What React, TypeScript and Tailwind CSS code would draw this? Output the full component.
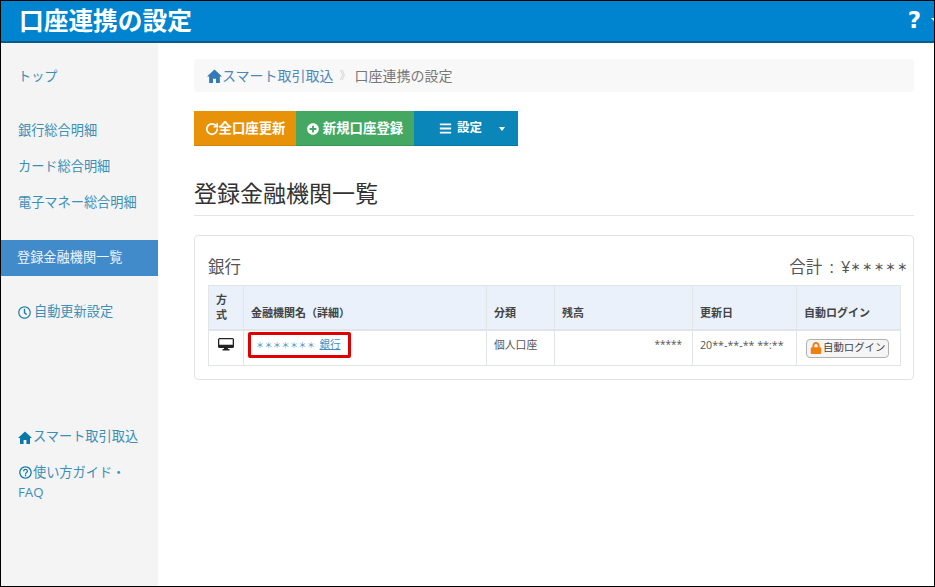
import React from "react";
import { FaPlusCircle, FaBars, FaRegClock, FaLock } from "react-icons/fa";
import { MdOutlineHelpOutline } from "react-icons/md";
import { RotateCw } from "lucide-react";

const FONT = "font-['Open_Sans','Noto_Sans_CJK_JP',sans-serif]";

function HomeIcon({ className = "" }: { className?: string }) {
    return (
        <svg viewBox="0 0 14 13" className={className} fill="currentColor">
            <path d="M7 0.5 L14 7 H12 V13 H8.4 V9 H5.6 V13 H2 V7 H0 Z" />
        </svg>
    );
}

function MonitorIcon() {
    return (
        <svg viewBox="0 0 16 13" className="mx-auto w-[16px] h-[13px] text-[#222222]" fill="currentColor">
            <path d="M1.5 0 H14.5 A1.5 1.5 0 0 1 16 1.5 V8.5 A1.5 1.5 0 0 1 14.5 10 H10 V11 H11.5 V12.5 H4.5 V11 H6 V10 H1.5 A1.5 1.5 0 0 1 0 8.5 V1.5 A1.5 1.5 0 0 1 1.5 0 Z M1.3 1.3 V6.8 H14.7 V1.3 Z" fillRule="evenodd" />
        </svg>
    );
}

function SideLink({ children, className = "" }: { children: React.ReactNode; className?: string }) {
    return (
        <a className={`flex items-center h-9 pl-[17px] text-[13.2px] text-[#3b8fb5] ${className}`}>{children}</a>
    );
}

const TH = "border border-[#e2e5e8] border-b-2 align-bottom pb-[7px] px-[7px] text-left font-bold";
const TD = "border border-[#e2e5e8] align-top";

export default function App() {
    return (
        <div className={`${FONT} w-[935px] h-[587px] flex flex-col border border-black bg-white overflow-hidden`}>
            {/* Header */}
            <header className="h-[42px] shrink-0 flex items-center justify-between bg-[#0084d0] border-b-2 border-[#0b5a88] pl-[18px]">
                <h1 className="text-[24.7px] font-bold text-white leading-none">口座連携の設定</h1>
                <div className="flex items-center gap-[10px] -mr-[5px] pb-[2px]">
                    <span className="text-[23px] font-bold text-white leading-none font-['DejaVu_Sans',sans-serif]">?</span>
                    <span className="w-0 h-0 border-x-[4px] border-x-transparent border-t-[4px] border-t-white" />
                </div>
            </header>

            <div className="flex-1 flex min-h-0">
                {/* Sidebar */}
                <aside className="w-[157px] shrink-0 bg-[#f4f4f5] pt-[16px]">
                    <SideLink className="mb-[18px]">トップ</SideLink>
                    <SideLink>銀行総合明細</SideLink>
                    <SideLink>カード総合明細</SideLink>
                    <SideLink className="mb-[19px]">電子マネー総合明細</SideLink>
                    <a className="flex items-center h-9 pl-[16px] text-[13.2px] text-[#eef5fb] bg-[#428bca]">登録金融機関一覧</a>
                    <SideLink className="mt-[18px] mb-[89px]">
                        <FaRegClock className="text-[13px] mr-[3px] text-[#1f7fa8]" />
                        自動更新設定
                    </SideLink>
                    <SideLink>
                        <HomeIcon className="w-[14px] h-[13px] mr-[1px] text-[#0a78a8]" />
                        スマート取引取込
                    </SideLink>
                    <a className="block pl-[17px] pt-[7px] text-[13.2px] leading-[20px] text-[#3b8fb5]">
                        <span className="flex items-center">
                            <MdOutlineHelpOutline className="text-[15px] text-[#0a78a8]" />
                            使い方ガイド・
                        </span>
                        FAQ
                    </a>
                </aside>

                {/* Main */}
                <main className="w-[756px] pl-[36px] pt-[16px]">
                    <nav className="h-[33px] flex items-center bg-[#f8f8f8] rounded-sm pl-[13px] text-[14px]">
                        <HomeIcon className="w-[15px] h-[14px] text-[#337ab7]" />
                        <span className="text-[#4d88b8]">スマート取引取込</span>
                        <span className="text-[#cccccc] text-[11px] ml-[6px] mr-[4px]">》</span>
                        <span className="text-[#777777]">口座連携の設定</span>
                    </nav>

                    <div className="flex mt-[19px] h-[35px] text-white text-[13.4px] font-bold">
                        <button className="w-[102px] flex items-center justify-center pt-[1px] bg-[#e8920a] border-b border-[#d08208]">
                            <RotateCw size={14} strokeWidth={3} />
                            全口座更新
                        </button>
                        <button className="w-[118px] flex items-center justify-center gap-[4px] pt-[1px] bg-[#45a862] border-b border-[#3c9656]">
                            <FaPlusCircle className="text-[12px]" />
                            新規口座登録
                        </button>
                        <button className="w-[104px] flex items-center pt-[1px] bg-[#0a86b8] border-b border-[#08769f] pl-[25px]">
                            <FaBars className="text-[13px] mr-[5px]" />
                            <span className="text-[12.5px]">設定</span>
                            <span className="ml-[17px] w-0 h-0 border-x-[3.5px] border-x-transparent border-t-[4px] border-t-white" />
                        </button>
                    </div>

                    <h2 className="mt-[34px] h-[35px] text-[23px] leading-[27px] text-[#333333] border-b border-[#e4e4e4] box-content">
                        登録金融機関一覧
                    </h2>

                    <section className="mt-[19px] h-[145px] border border-[#e3e3e3] rounded-[4px] pl-[13px] pr-[7px] pt-[17px]">
                        <div className="flex items-center justify-between h-[32px] pb-[4px] -mr-[3px] text-[#555555]">
                            <span className="text-[16.5px]">銀行</span>
                            <span className="text-[16.5px] flex items-center whitespace-pre">
                                合計<span className="mx-[3px]"> : </span>¥<span className="text-[10px] tracking-[1.7px] font-bold">＊＊＊＊＊</span>
                            </span>
                        </div>
                        <table className="w-[692px] table-fixed border-collapse text-[11px] text-[#555555]">
                            <colgroup>
                                <col className="w-[35px]" />
                                <col className="w-[243px]" />
                                <col className="w-[68px]" />
                                <col className="w-[138px]" />
                                <col className="w-[104px]" />
                                <col className="w-[104px]" />
                            </colgroup>
                            <thead>
                                <tr className="h-[44px] bg-[#eaf1fa] text-[#444444]">
                                    <th className={`${TH} leading-[15px]`}>方<br />式</th>
                                    <th className={TH}>金融機関名（詳細）</th>
                                    <th className={TH}>分類</th>
                                    <th className={TH}>残高</th>
                                    <th className={TH}>更新日</th>
                                    <th className={TH}>自動ログイン</th>
                                </tr>
                            </thead>
                            <tbody>
                                <tr className="h-[36px]">
                                    <td className={`${TD} pt-[7px]`}>
                                        <MonitorIcon />
                                    </td>
                                    <td className={`${TD} pl-[4px] pt-[1px]`}>
                                        <span className="flex items-center w-[103px] h-[26px] border-[3px] border-[#e00000] rounded-[2px] pl-[5px] text-[#3b8fc4]">
                                            <span className="text-[8px] tracking-[0.5px] mr-[4px] whitespace-nowrap">＊＊＊＊＊＊＊</span>
                                            <span className="text-[10.5px] underline whitespace-nowrap">銀行</span>
                                        </span>
                                    </td>
                                    <td className={`${TD} pt-[6px] px-[7px] text-[10.8px]`}>個人口座</td>
                                    <td className={`${TD} pt-[6px] px-[10px] text-right text-[10px]`}>*****</td>
                                    <td className={`${TD} pt-[6px] px-[7px] text-[10.7px] whitespace-nowrap`}>20**-**-** **:**</td>
                                    <td className={`${TD} pt-[8px] pl-[9px]`}>
                                        <button className="flex items-center w-[83px] h-[19px] bg-[#f5f5f5] border border-[#b0b0b0] rounded-[4px] pl-[3px] text-[10.4px] text-[#444444] whitespace-nowrap">
                                            <FaLock className="text-[12px] text-[#f08010] mr-[1px]" />
                                            自動ログイン
                                        </button>
                                    </td>
                                </tr>
                            </tbody>
                        </table>
                    </section>
                </main>
            </div>
        </div>
    );
}
